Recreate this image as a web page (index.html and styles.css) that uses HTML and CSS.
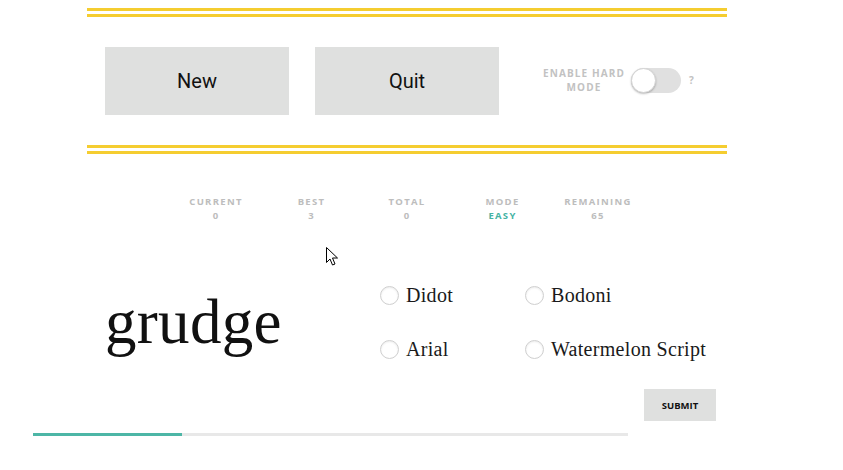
FILE: index.html
```html
<!DOCTYPE html>
<html lang="en">
<head>
<meta charset="utf-8">
<title>Font game</title>
<link rel="stylesheet" href="styles.css">
</head>
<body>
<div class="page">
  <div class="rule"></div>
  <div class="controls">
    <button class="btn">New</button>
    <button class="btn btn-quit">Quit</button>
    <div class="hard">
      <span class="hard-label">ENABLE HARD<br>MODE</span>
      <span class="toggle"><span class="knob"></span></span>
      <span class="help">?</span>
    </div>
  </div>
  <div class="rule"></div>
  <div class="stats">
    <div class="stat"><div class="stat-label">CURRENT</div><div class="stat-value">0</div></div>
    <div class="stat"><div class="stat-label">BEST</div><div class="stat-value">3</div></div>
    <div class="stat"><div class="stat-label">TOTAL</div><div class="stat-value">0</div></div>
    <div class="stat"><div class="stat-label">MODE</div><div class="stat-value stat-mode">EASY</div></div>
    <div class="stat"><div class="stat-label">REMAINING</div><div class="stat-value">65</div></div>
  </div>
  <div class="game">
    <div class="word">grudge</div>
    <div class="options">
      <label class="option"><span class="radio"></span><span class="option-text">Didot</span></label>
      <label class="option"><span class="radio"></span><span class="option-text">Bodoni</span></label>
      <label class="option"><span class="radio"></span><span class="option-text">Arial</span></label>
      <label class="option"><span class="radio"></span><span class="option-text">Watermelon Script</span></label>
    </div>
  </div>
  <div class="submit-row"><button class="submit">SUBMIT</button></div>
</div>
<div class="progress"><div class="progress-fill" style="width:149px"></div></div>
<svg class="cursor" width="13" height="20" viewBox="0 0 13 20">
  <path d="M0.5 0.5 L0.5 15.5 L4 12 L6.5 18 L9 17 L6.5 11 L11.5 11 Z" fill="#fff" stroke="#000" stroke-width="1" stroke-linejoin="miter"/>
</svg>
</body>
</html>
```

FILE: styles.css
```css
* { box-sizing: border-box; }
html, body { margin: 0; padding: 0; background: #fff; }
body { position: relative; font-family: Roboto, "Liberation Sans", sans-serif; }

.page {
  width: 640px;
  margin-left: 87px;
  padding-top: 8px;
}

.rule {
  height: 9px;
  border-top: 3px solid #f5cd30;
  border-bottom: 3px solid #f5cd30;
}

.controls {
  display: flex;
  align-items: center;
  padding: 30px 0 30px 18px;
}

.btn {
  width: 184px;
  height: 68px;
  border: 0;
  background: #dfe0df;
  font-family: Roboto, "Liberation Sans", sans-serif;
  font-size: 20px;
  color: #111;
  padding: 0;
  margin: 0;
}
.btn-quit { margin-left: 26px; }

.hard {
  display: flex;
  align-items: center;
  margin-left: 42px;
  margin-top: -2px;
}
.hard-label {
  font-family: "Open Sans", "Liberation Sans", sans-serif;
  font-weight: 700;
  font-size: 10px;
  line-height: 14px;
  letter-spacing: 1.1px;
  color: #c2c2c2;
  text-align: center;
  width: 86px;
}
.toggle {
  position: relative;
  display: block;
  width: 50px;
  height: 25px;
  border-radius: 13px;
  background: #e0e0e0;
  margin-left: 4px;
}
.knob {
  position: absolute;
  left: 0;
  top: 0;
  width: 25px;
  height: 25px;
  border-radius: 50%;
  background: #fff;
  border: 1px solid #d4d4d4;
  box-shadow: 0 1px 2px rgba(0,0,0,0.25);
}
.help {
  font-family: "Open Sans", "Liberation Sans", sans-serif;
  font-weight: 700;
  font-size: 10px;
  color: #c2c2c2;
  margin-left: 8px;
}

.stats {
  display: grid;
  grid-template-columns: repeat(5, 95.5px);
  justify-content: center;
  margin-top: 41px;
}
.stat { text-align: center; }
.stat-label, .stat-value {
  font-family: "Open Sans", "Liberation Sans", sans-serif;
  font-weight: 700;
  font-size: 9.5px;
  line-height: 14px;
  letter-spacing: 1.3px;
  color: #bdbdbd;
}
.stat-mode { color: #45b3a3; }

.game {
  display: flex;
  align-items: flex-start;
  margin-top: 60px;
  padding-left: 18px;
}
.word {
  width: 275px;
  margin-top: 8px;
  font-family: "Liberation Serif", "Times New Roman", serif;
  font-size: 63px;
  line-height: 62px;
  color: #111;
  letter-spacing: 0.3px;
}
.options {
  display: grid;
  grid-template-columns: 145px 200px;
  row-gap: 29px;
}
.option {
  display: flex;
  align-items: center;
  height: 25px;
}
.radio {
  display: block;
  width: 19px;
  height: 19px;
  border-radius: 50%;
  border: 1px solid #cfcfcf;
  background: #fff;
  box-shadow: inset 0 1px 2px rgba(0,0,0,0.08);
}
.option-text {
  margin-left: 7px;
  font-family: "Liberation Serif", "Times New Roman", serif;
  font-size: 20px;
  line-height: 25px;
  letter-spacing: 0.3px;
  color: #1a1a1a;
}

.submit-row {
  display: flex;
  justify-content: flex-end;
  padding-right: 11px;
  margin-top: 27px;
}
.submit {
  width: 72px;
  height: 32px;
  border: 0;
  padding: 0;
  background: #dfe0df;
  font-family: "Open Sans", "Liberation Sans", sans-serif;
  font-weight: 700;
  font-size: 9.5px;
  color: #111;
}

.progress {
  width: 595px;
  height: 3px;
  margin: 12px 0 0 33px;
  background: #e8e8e8;
}
.progress-fill {
  height: 3px;
  background: #4db6a6;
}

.cursor {
  position: absolute;
  left: 326px;
  top: 247px;
}
```
